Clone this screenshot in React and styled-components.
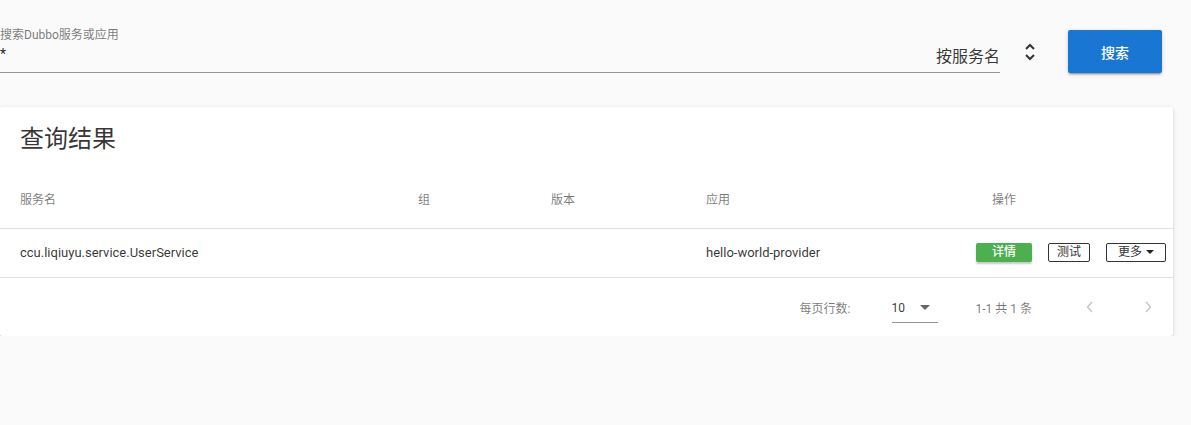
import React from "react";
import styled, { createGlobalStyle } from "styled-components";

const Global = createGlobalStyle`
  body {
    margin: 0;
    background: #fafafa;
    font-family: Roboto, "Noto Sans CJK SC", sans-serif;
    color: rgba(0, 0, 0, 0.87);
  }
`;

const Page = styled.div`
  width: 1191px;
  padding-top: 28px;
`;

const SearchBar = styled.div`
  display: flex;
  align-items: flex-start;
  height: 79px;
`;

const Field = styled.div`
  width: 1000px;
  height: 44px;
  display: flex;
  align-items: flex-end;
  border-bottom: 1px solid #949494;
`;

const FieldMain = styled.div`
  flex: 1;
  display: flex;
  flex-direction: column;
  align-self: stretch;
`;

const FieldLabel = styled.label`
  font-size: 12px;
  line-height: 14px;
  color: rgba(0, 0, 0, 0.54);
`;

const FieldValue = styled.div`
  font-size: 14px;
  line-height: 20px;
  padding-top: 2px;
  color: rgba(0, 0, 0, 0.87);
`;

const SelectValue = styled.div`
  font-size: 16px;
  line-height: 20px;
  padding-bottom: 5px;
  color: rgba(0, 0, 0, 0.8);
`;

const SortIcon = styled.div`
  width: 68px;
  height: 44px;
  display: flex;
  align-items: center;
  justify-content: center;
  padding-right: 8px;
  box-sizing: border-box;
  svg {
    margin-top: 4px;
  }
`;

const SearchButton = styled.button`
  width: 94px;
  height: 43px;
  margin-top: 2px;
  border: 0;
  border-radius: 2px;
  background: #1976d2;
  color: #fff;
  font-family: inherit;
  font-size: 14px;
  font-weight: 500;
  box-shadow: 0 3px 1px -2px rgba(0, 0, 0, 0.2), 0 2px 2px 0 rgba(0, 0, 0, 0.14),
    0 1px 5px 0 rgba(0, 0, 0, 0.12);
  cursor: pointer;
`;

const Card = styled.div`
  width: 1173px;
  background: #fff;
  border-radius: 2px;
  box-shadow: 0 3px 1px -2px rgba(0, 0, 0, 0.2), 0 2px 2px 0 rgba(0, 0, 0, 0.14),
    0 1px 5px 0 rgba(0, 0, 0, 0.12);
`;

const Title = styled.h2`
  margin: 0;
  padding: 16px 20px 17px;
  font-size: 24px;
  line-height: 32px;
  font-weight: 400;
  color: rgba(0, 0, 0, 0.8);
`;

const Row = styled.div`
  display: grid;
  grid-template-columns: 398px 133px 155px 270px 1fr;
  align-items: center;
  padding-left: 20px;
  box-sizing: border-box;
  height: ${(p) => (p.head ? "57px" : "49px")};
  padding-bottom: ${(p) => (p.head ? "4px" : "2px")};
  border-bottom: 1px solid rgba(0, 0, 0, 0.12);
  font-size: ${(p) => (p.head ? "12px" : "13px")};
  color: ${(p) => (p.head ? "rgba(0, 0, 0, 0.54)" : "rgba(0, 0, 0, 0.8)")};
`;

const Cell = styled.div`
  padding-left: ${(p) => p.indent || 0}px;
  white-space: nowrap;
`;

const Actions = styled.div`
  display: flex;
  gap: 16px;
  align-items: center;
`;

const SmallButton = styled.button`
  height: 19px;
  min-width: ${(p) => p.w}px;
  padding: 0;
  display: flex;
  align-items: center;
  justify-content: center;
  gap: 4px;
  border-radius: 2px;
  font-family: inherit;
  font-size: 12px;
  line-height: 17px;
  cursor: pointer;
  border: ${(p) => (p.primary ? "0" : "1px solid #333")};
  background: ${(p) => (p.primary ? "#4caf50" : "#fff")};
  color: ${(p) => (p.primary ? "#fff" : "#333")};
  font-weight: ${(p) => (p.primary ? 500 : 400)};
  box-shadow: ${(p) => (p.primary ? "0 2px 2px rgba(0,0,0,0.22)" : "none")};
`;

const Caret = styled.span`
  width: 0;
  height: 0;
  border-left: 4px solid transparent;
  border-right: 4px solid transparent;
  border-top: 4px solid #222;
`;

const Footer = styled.div`
  height: 58px;
  display: flex;
  align-items: center;
  justify-content: flex-end;
  padding-right: 7px;
  font-size: 12px;
  color: rgba(0, 0, 0, 0.54);
`;

const PerPage = styled.div`
  width: 46px;
  margin-left: 41px;
  margin-top: 2px;
  height: 30px;
  display: flex;
  align-items: center;
  justify-content: space-between;
  border-bottom: 1px solid #949494;
  box-sizing: border-box;
  color: rgba(0, 0, 0, 0.8);
  font-size: 12px;
  padding-right: 8px;
`;

const PerPageCaret = styled(Caret)`
  border-left-width: 5px;
  border-right-width: 5px;
  border-top-width: 5px;
  border-top-color: #666;
`;

const Range = styled.span`
  margin-left: 38px;
  margin-right: 40px;
`;

const PageBtn = styled.button`
  width: 36px;
  height: 36px;
  margin-left: ${(p) => p.ml || 0}px;
  border: 0;
  background: transparent;
  padding: 0;
  display: flex;
  align-items: center;
  justify-content: center;
`;

const Chevron = ({ dir }) => (
  <svg width="10" height="14" viewBox="0 0 10 14">
    <path
      d={dir === "left" ? "M7 2 L2.5 7 L7 12" : "M3 2 L7.5 7 L3 12"}
      fill="none"
      stroke="#c4c4c4"
      strokeWidth="1.4"
    />
  </svg>
);

const rows = [
  {
    service: "ccu.liqiuyu.service.UserService",
    group: "",
    version: "",
    app: "hello-world-provider",
  },
];

export default function App() {
  return (
    <Page>
      <Global />
      <SearchBar>
        <Field>
          <FieldMain>
            <FieldLabel>搜索Dubbo服务或应用</FieldLabel>
            <FieldValue>*</FieldValue>
          </FieldMain>
          <SelectValue>按服务名</SelectValue>
        </Field>
        <SortIcon>
          <svg width="14" height="18" viewBox="0 0 14 18">
            <path d="M3 6 L7 2 L11 6" fill="none" stroke="#333" strokeWidth="2" />
            <path d="M3 12 L7 16 L11 12" fill="none" stroke="#333" strokeWidth="2" />
          </svg>
        </SortIcon>
        <SearchButton>搜索</SearchButton>
      </SearchBar>

      <Card>
        <Title>查询结果</Title>
        <Row head>
          <Cell>服务名</Cell>
          <Cell>组</Cell>
          <Cell>版本</Cell>
          <Cell>应用</Cell>
          <Cell indent={16}>操作</Cell>
        </Row>
        {rows.map((r) => (
          <Row key={r.service}>
            <Cell>{r.service}</Cell>
            <Cell>{r.group}</Cell>
            <Cell>{r.version}</Cell>
            <Cell>{r.app}</Cell>
            <Actions>
              <SmallButton primary w={56}>详情</SmallButton>
              <SmallButton w={42}>测试</SmallButton>
              <SmallButton w={60}>
                更多 <Caret />
              </SmallButton>
            </Actions>
          </Row>
        ))}
        <Footer>
          <span>每页行数:</span>
          <PerPage>
            <span>10</span>
            <PerPageCaret />
          </PerPage>
          <Range>1-1 共 1 条</Range>
          <PageBtn>
            <Chevron dir="left" />
          </PageBtn>
          <PageBtn ml={22}>
            <Chevron dir="right" />
          </PageBtn>
        </Footer>
      </Card>
    </Page>
  );
}
